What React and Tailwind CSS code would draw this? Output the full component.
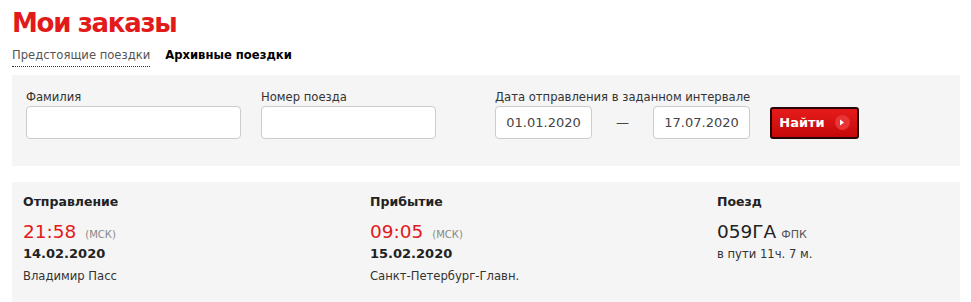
import React from 'react';

const font = { fontFamily: '"DejaVu Sans", Verdana, sans-serif' };

const Column = ({ title, time, date, place }) => (
  <div>
    <div className="text-[12.5px] font-bold text-[#222] leading-4">{title}</div>
    <div className="mt-[10px] flex items-baseline gap-[9px]">
      <span className="text-[18.5px] leading-6 text-[#e21a1a]">{time}</span>
      <span className="text-[10px] text-[#888]">(МСК)</span>
    </div>
    <div className="mt-[2px] text-[13px] font-bold text-[#222] leading-4">{date}</div>
    <div className="mt-[6px] text-[11.6px] text-[#333] leading-4">{place}</div>
  </div>
);

export default function App() {
  return (
    <div className="bg-white w-[971px] h-[302px] overflow-hidden pl-3 pr-[11px]" style={font}>
      <h1 className="pt-[7px] text-[26px] tracking-[-1.3px] font-bold leading-8 text-[#e21a1a]">Мои заказы</h1>
      <div className="mt-[8px] flex items-center gap-[15px] text-[11.6px] leading-4">
        <span className="text-[#555] border-b border-dotted border-[#333] pb-[3px]">Предстоящие поездки</span>
        <span className="font-bold text-black pb-[4px]">Архивные поездки</span>
      </div>

      <div className="mt-[8px] h-[91px] bg-[#f5f5f5] pl-[14px] pt-[14px] flex items-start">
        <div className="w-[215px]">
          <div className="text-[11.6px] leading-4 text-[#333]">Фамилия</div>
          <div className="mt-[1px] h-[33px] bg-white border border-[#ccc] rounded-[4px]" />
        </div>
        <div className="ml-5 w-[175px]">
          <div className="text-[11.6px] leading-4 text-[#333]">Номер поезда</div>
          <div className="mt-[1px] h-[33px] bg-white border border-[#ccc] rounded-[4px]" />
        </div>
        <div className="ml-[59px]">
          <div className="text-[11.6px] leading-4 text-[#333]">Дата отправления в заданном интервале</div>
          <div className="mt-[1px] flex items-center">
            <div className="w-[97px] h-[33px] bg-white border border-[#ccc] rounded-[4px] flex items-center justify-center text-[13px] text-[#444]">01.01.2020</div>
            <div className="w-[61px] text-center text-[13px] text-[#444]">—</div>
            <div className="w-[97px] h-[33px] bg-white border border-[#ccc] rounded-[4px] flex items-center justify-center text-[13px] text-[#444]">17.07.2020</div>
            <button className="ml-[20px] w-[89px] h-[32px] rounded-[3px] border-2 border-[#2a0505] bg-gradient-to-b from-[#e61b1b] to-[#c50808] flex items-center justify-center gap-[10px] text-white text-[13px] font-bold">
              <span>Найти</span>
              <span className="w-[15px] h-[15px] rounded-full bg-[#e83434] flex items-center justify-center">
                <svg width="6" height="7" viewBox="0 0 6 7"><path d="M1 0.5 L5 3.5 L1 6.5 Z" fill="white" /></svg>
              </span>
            </button>
          </div>
        </div>
      </div>

      <div className="mt-4 h-[130px] bg-[#f5f5f5] pl-[11px] pt-[12px] grid grid-cols-[347px_347px_1fr]">
        <Column title="Отправление" time="21:58" date="14.02.2020" place="Владимир Пасс" />
        <Column title="Прибытие" time="09:05" date="15.02.2020" place="Санкт-Петербург-Главн." />
        <div>
          <div className="text-[12.5px] font-bold text-[#222] leading-4">Поезд</div>
          <div className="mt-[10px] flex items-baseline gap-[5px]">
            <span className="text-[18.5px] leading-6 text-[#222]">059ГА</span>
            <span className="text-[11px] text-[#555]">ФПК</span>
          </div>
          <div className="mt-[2px] text-[11.6px] text-[#333] leading-4">в пути 11ч. 7 м.</div>
        </div>
      </div>
    </div>
  );
}
